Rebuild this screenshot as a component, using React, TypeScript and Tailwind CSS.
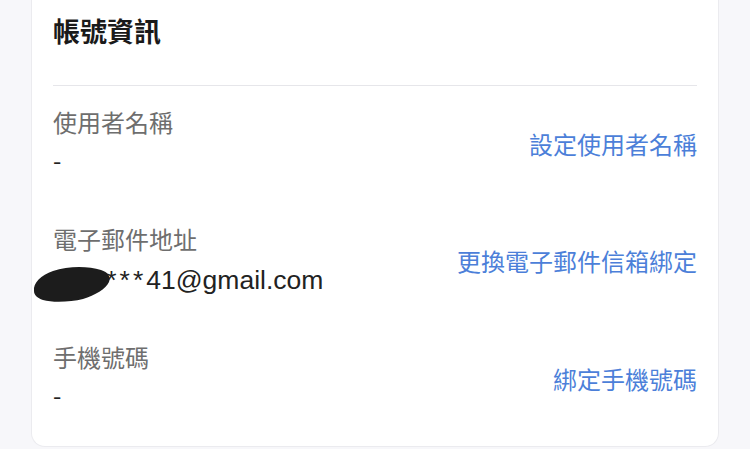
import React from "react";

const font = '"Noto Sans CJK TC", "Noto Sans", sans-serif';

function Row({ label, value, action, blob }: { label: string; value: React.ReactNode; action: string; blob?: boolean }) {
  return (
    <div className="flex items-center justify-between">
      <div className="flex flex-col">
        <div className="text-[24px] leading-[30px] text-[#6e6e6e]">{label}</div>
        <div className="relative mt-2 text-[24px] leading-[30px] text-[#222222]">
          {value}
          {blob && (
            <svg
              className="absolute left-[-20px] top-[3px]"
              width="80"
              height="40"
              viewBox="0 0 80 40"
            >
              <path
                d="M1 26 C0 18 8 10 20 6 C35 1 55 1 68 5 C75 7 78 12 76 17 C73 24 62 30 50 34 C38 37 20 38 10 35 C4 33 1 30 1 26 Z"
                fill="#1c1c1c"
              />
            </svg>
          )}
        </div>
      </div>
      <div className="pt-[5px] text-[24px] leading-[30px] text-[#4c7fd9]">{action}</div>
    </div>
  );
}

export default function App() {
  return (
    <div
      className="h-[449px] w-[750px] overflow-hidden bg-[#f7f7fa] px-[31px]"
      style={{ fontFamily: font }}
    >
      <div className="h-[447px] rounded-b-[14px] border border-t-0 border-[#ebebef] bg-white px-[21px]">
        <div className="pt-[14px] text-[27px] font-bold leading-[33px] text-[#1a1a1a]">帳號資訊</div>
        <div className="mt-[38px] h-px bg-[#e6e6ea]" />
        <div className="mt-[21px] flex flex-col gap-[49px]">
          <Row label="使用者名稱" value="-" action="設定使用者名稱" />
          <Row
            label="電子郵件地址"
            value={
              <span
                style={{ fontFamily: '"Liberation Sans", Arial, sans-serif' }}
                className="relative top-[2px] text-[26.5px]"
              >
                <span className="tracking-[3px]">*******</span>41@gmail.com
              </span>
            }
            action="更換電子郵件信箱綁定"
            blob
          />
          <Row label="手機號碼" value="-" action="綁定手機號碼" />
        </div>
      </div>
    </div>
  );
}
